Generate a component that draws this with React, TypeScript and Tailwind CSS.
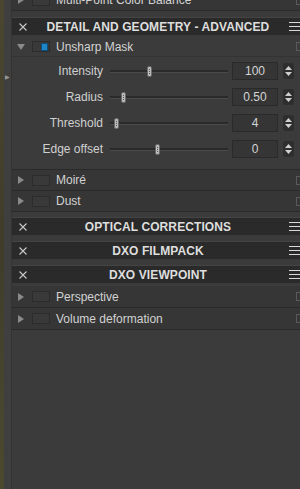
import React from 'react';

const font = { fontFamily: '"Liberation Sans", Arial, sans-serif' };

const CloseX = () => (
  <svg width="8" height="8" viewBox="0 0 8 8" className="shrink-0">
    <path d="M0.5 0.5 L7.5 7.5 M7.5 0.5 L0.5 7.5" stroke="#c8c8c8" strokeWidth="1.1" />
  </svg>
);

const Burger = () => (
  <div className="flex flex-col gap-[3px] w-[11px] shrink-0">
    <div className="h-px bg-[#d8d8d8]" />
    <div className="h-px bg-[#d8d8d8]" />
    <div className="h-px bg-[#d8d8d8]" />
  </div>
);

const Header = ({ title, className = '' }: { title: string; className?: string }) => (
  <div
    className={`h-[18px] flex items-center bg-[#2a2a2a] border-t border-[#444] pl-[7px] pr-0 ${className}`}
  >
    <CloseX />
    <span className="flex-1 text-center text-[12px] font-bold text-[#dedede] tracking-[0.1px] leading-none">
      {title}
    </span>
    <Burger />
  </div>
);

const Toggle = ({ on = false }: { on?: boolean }) => (
  <div className="w-[18px] h-[11px] border border-[#2c2c2c] bg-[#393939] flex justify-end items-center pr-px shrink-0">
    {on && <div className="w-[7px] h-[8px] bg-[#1d86c6] border border-[#0f4e78]" />}
  </div>
);

const Arrow = ({ open = false }: { open?: boolean }) => (
  <svg width="8" height="8" viewBox="0 0 8 8" className="shrink-0">
    {open ? <path d="M0 1 L8 1 L4 7 Z" fill="#8a8a8a" /> : <path d="M1 0 L7 4 L1 8 Z" fill="#8a8a8a" />}
  </svg>
);

const SubRow = ({
  label,
  open = false,
  on = false,
  className = 'h-[21px]',
}: {
  label: string;
  open?: boolean;
  on?: boolean;
  className?: string;
}) => (
  <div
    className={`flex items-center bg-[#363636] border-b border-[#2a2a2a] pl-[5px] ${className}`}
  >
    <Arrow open={open} />
    <div className="ml-[7px]">
      <Toggle on={on} />
    </div>
    <span className="ml-[6px] flex-1 text-[12px] text-[#d2d2d2] leading-none">{label}</span>
    <div className="w-[4px] h-[9px] border-l border-t border-b border-[#5a5a5a]" />
  </div>
);

const SliderRow = ({ label, pos, value }: { label: string; pos: number; value: string }) => (
  <div className="h-[26px] flex items-center">
    <span className="w-[91px] text-right text-[12px] text-[#d0d0d0] leading-none">{label}</span>
    <div className="ml-[7px] w-[118px] h-[11px] relative flex items-center">
      <div className="w-full h-[3px] bg-[#2a2a2a] border-b border-[#4a4a4a]" />
      <div
        className="absolute top-0 w-[5px] h-[11px] rounded-[2px] bg-[#bcbcbc] border border-[#6a6a6a] flex flex-col items-center justify-center gap-px"
        style={{ left: pos }}
      >
        <div className="w-px h-px bg-[#555]" />
        <div className="w-px h-px bg-[#555]" />
        <div className="w-px h-px bg-[#555]" />
      </div>
    </div>
    <div className="ml-[4px] w-[46px] h-[18px] bg-[#353535] border border-[#2a2a2a] flex items-center justify-center text-[12px] text-[#d4d4d4] leading-none">
      {value}
    </div>
    <div className="ml-[5px] w-[11px] h-[16px] rounded-[2px] bg-[#2e2e2e] flex flex-col items-center justify-center gap-[2px]">
      <svg width="7" height="4" viewBox="0 0 7 4">
        <path d="M0 4 L3.5 0 L7 4 Z" fill="#cfcfcf" />
      </svg>
      <svg width="7" height="4" viewBox="0 0 7 4">
        <path d="M0 0 L3.5 4 L7 0 Z" fill="#cfcfcf" />
      </svg>
    </div>
  </div>
);

export default function App() {
  return (
    <div className="w-[300px] h-[489px] flex overflow-hidden bg-[#3b3b3b]" style={font}>
      <div className="w-[4px] bg-gradient-to-b from-[#4a4630] via-[#3f3d2a] to-[#4b4a30]" />
      <div className="w-[8px] bg-[#3f3f3f] border-r border-[#333] relative">
        <span className="absolute left-[1px] top-[74px] text-[6px] text-[#9a9a9a] leading-none">▶</span>
      </div>
      <div className="flex-1 flex flex-col">
        <SubRow label="Multi-Point Color Balance" className="h-[21px] -mt-[10px]" />
        <Header title="DETAIL AND GEOMETRY - ADVANCED" className="mt-[6px]" />
        <div className="mt-[2px] h-[20px] flex items-center pl-[5px] border-b border-[#333]">
          <Arrow open />
          <div className="ml-[7px]">
            <Toggle on />
          </div>
          <span className="ml-[6px] flex-1 text-[12px] text-[#d2d2d2] leading-none">Unsharp Mask</span>
          <div className="w-[4px] h-[9px] border-l border-t border-b border-[#5a5a5a]" />
        </div>
        <div className="mt-px flex flex-col">
          <SliderRow label="Intensity" pos={37} value="100" />
          <SliderRow label="Radius" pos={11} value="0.50" />
          <SliderRow label="Threshold" pos={4} value="4" />
          <SliderRow label="Edge offset" pos={45} value="0" />
        </div>
        <SubRow label="Moiré" className="h-[22px] mt-[7px] border-t border-[#2a2a2a]" />
        <SubRow label="Dust" className="h-[21px]" />
        <Header title="OPTICAL CORRECTIONS" className="mt-[5px]" />
        <Header title="DXO FILMPACK" className="mt-[6px]" />
        <Header title="DXO VIEWPOINT" className="mt-[6px]" />
        <SubRow label="Perspective" className="h-[22px] mt-[3px]" />
        <SubRow label="Volume deformation" className="h-[22px]" />
      </div>
    </div>
  );
}
